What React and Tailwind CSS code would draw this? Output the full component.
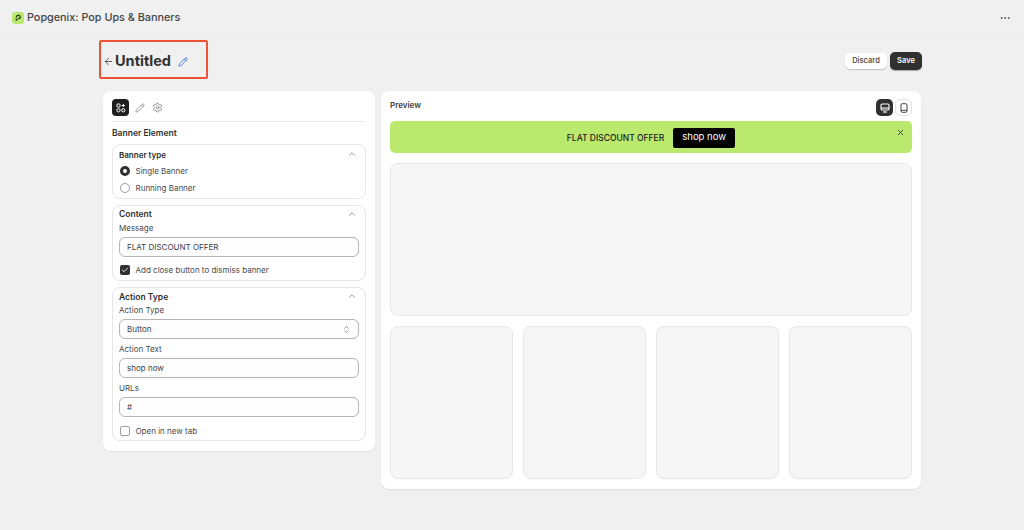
import React from "react";
import { ArrowLeft, Pencil, Settings, ChevronUp, ChevronsUpDown, Check, X, Ellipsis } from "lucide-react";

function Section({ title, h, titleClass, children }) {
  return (
    <div className={`border border-[#e6e6e6] rounded-[8px] px-[6px] ${h}`}>
      <div className={`flex items-center justify-between h-[12px] ${titleClass}`}>
        {title}
        <ChevronUp size={10} strokeWidth={1.5} className="text-[#555] mr-[2px] -mt-[2px]" />
      </div>
      {children}
    </div>
  );
}

function Field({ label, value, right }) {
  return (
    <div>
      <div className="text-[8px] leading-[12px] pt-[0.5px] text-[#4a4a4a]">{label}</div>
      <div className="mt-[3px] h-[20px] border border-[#b5b5b5] rounded-[6px] bg-[#fdfdfd] px-[7px] flex items-center justify-between text-[8px] text-[#404040]">
        <span>{value}</span>
        {right}
      </div>
    </div>
  );
}

function Radio({ on, label }) {
  return (
    <div className="flex items-center gap-[5.5px] h-[17px] pl-[1px]">
      <span className={`w-[10px] h-[10px] rounded-full bg-white ${on ? "border-[3px] border-[#303030]" : "border border-[#a0a0a0]"}`} />
      <span className="text-[8px] text-[#4a4a4a]">{label}</span>
    </div>
  );
}

export default function App() {
  return (
    <div className="w-[1024px] h-[530px] overflow-hidden bg-[#f0f0f0] text-[#303030]" style={{ fontFamily: "Inter, 'Liberation Sans', sans-serif" }}>
      <header className="h-[34px] pt-[3px] border-b border-[#ebebeb] flex items-center justify-between pl-[12px] pr-[13px]">
        <div className="flex items-center gap-[3px]">
          <span className="w-[12px] h-[12px] rounded-[3px] bg-[#b9e86c] flex items-center justify-center">
            <svg width="8" height="8" viewBox="0 0 8 8" fill="none">
              <path d="M2.4 3.6V3a1.6 1.6 0 0 1 1.6-1.6h.6A1.6 1.6 0 0 1 6.2 3v.2a1.4 1.4 0 0 1-1.4 1.4H4" stroke="#1f3a12" strokeWidth="1.3" />
              <circle cx="2.5" cy="5.6" r="1.1" fill="#1f3a12" />
            </svg>
          </span>
          <span className="text-[10.8px] font-medium text-[#444] leading-none">Popgenix: Pop Ups &amp; Banners</span>
        </div>
        <Ellipsis size={12} className="text-[#555]" />
      </header>

      <main className="w-[818px] mx-auto">
        <div className="h-[52px] mb-[5px] flex items-center justify-between">
          <div className="-ml-[4px] -mt-[2px] w-[109px] h-[39px] pt-[5px] border-2 border-[#ee5335] rounded-[2px] flex items-center pl-[2px]">
            <ArrowLeft size={11} strokeWidth={1.75} className="text-[#444]" />
            <span className="ml-[1px] text-[14.5px] font-bold text-[#303030] leading-none">Untitled</span>
            <Pencil size={10} strokeWidth={2} className="ml-[7px] text-[#2f6fdc]" />
          </div>
          <div className="flex items-center gap-[3px] mr-[-1px] mt-[1px]">
            <button className="w-[42px] h-[16px] rounded-[5px] bg-white shadow-[0_1px_1px_rgba(0,0,0,0.2)] text-[7.5px] font-semibold text-[#555]">Discard</button>
            <button className="w-[32px] h-[18px] rounded-[5px] bg-[#303030] shadow-[0_1px_1px_rgba(0,0,0,0.3)] text-[7.5px] font-semibold text-white">Save</button>
          </div>
        </div>

        <div className="flex items-start gap-[6px]">
          <section className="w-[272px] h-[360px] bg-white rounded-[8px] shadow-[0_1px_1px_rgba(0,0,0,0.08)] px-[9px] pt-[8px]">
            <div className="flex items-center gap-[6px] h-[17px] pb-[5px] border-b border-[#ebebeb] box-content">
              <span className="w-[17px] h-[17px] rounded-[4px] bg-[#1f1f1f] flex items-center justify-center">
                <svg width="10" height="10" viewBox="0 0 11 11" fill="none" stroke="white" strokeWidth="1.1">
                  <rect x="1" y="1" width="3.5" height="3.5" rx="1.2" />
                  <circle cx="2.75" cy="8" r="1.8" />
                  <circle cx="8" cy="8" r="1.8" />
                  <path d="M8 1v3.5M6.25 2.75h3.5" />
                </svg>
              </span>
              <Pencil size={10} strokeWidth={1.25} className="text-[#555]" />
              <Settings size={11} strokeWidth={1.25} className="text-[#555] ml-[1px]" />
            </div>
            <div className="h-[22px] flex items-center text-[8.5px] font-semibold text-[#303030]">Banner Element</div>

            <div className="flex flex-col gap-[6px]">
              <Section title={<span className="text-[8px] font-semibold text-[#303030]">Banner type</span>} h="h-[55px]" titleClass="mt-[4px]">
                <div className="mt-[1px]">
                  <Radio on label="Single Banner" />
                  <Radio label="Running Banner" />
                </div>
              </Section>

              <Section title={<span className="text-[8.5px] font-semibold text-[#303030]">Content</span>} h="h-[76px]" titleClass="mt-[2.5px] mb-[1px]">
                <Field label="Message" value="FLAT DISCOUNT OFFER" />
                <div className="flex items-center gap-[5.5px] mt-[7px] pl-[1px]">
                  <span className="w-[10px] h-[10px] rounded-[2px] bg-[#303030] flex items-center justify-center">
                    <Check size={8} strokeWidth={2.5} className="text-white" />
                  </span>
                  <span className="text-[8px] text-[#4a4a4a]">Add close button to dismiss banner</span>
                </div>
              </Section>

              <Section title={<span className="text-[8.5px] font-semibold text-[#303030]">Action Type</span>} h="h-[154px]" titleClass="mt-[3px] mb-[0.5px]">
                <div className="flex flex-col gap-[3.5px]">
                  <Field label="Action Type" value="Button" right={<ChevronsUpDown size={9} strokeWidth={1.5} className="text-[#555]" />} />
                  <Field label="Action Text" value="shop now" />
                  <Field label="URLs" value="#" />
                </div>
                <div className="flex items-center gap-[5.5px] mt-[8px] pl-[1px]">
                  <span className="w-[10px] h-[10px] rounded-[2px] border border-[#a0a0a0] bg-white" />
                  <span className="text-[8px] text-[#4a4a4a]">Open in new tab</span>
                </div>
              </Section>
            </div>
          </section>

          <section className="flex-1 h-[398px] bg-white rounded-[8px] shadow-[0_1px_1px_rgba(0,0,0,0.08)] px-[9px] pt-[8px]">
            <div className="h-[22px] flex items-start justify-between">
              <span className="text-[8px] font-semibold text-[#404040]">Preview</span>
              <div className="flex gap-[2px]">
                <span className="w-[17px] h-[17px] rounded-[5px] bg-[#303030] flex items-center justify-center">
                  <svg width="10" height="10" viewBox="0 0 10 10" fill="none" stroke="white" strokeWidth="1.1">
                    <rect x="1" y="1" width="8" height="6" rx="1.2" />
                    <path d="M1 5h8" />
                    <path d="M3.3 9h3.4" strokeWidth="1.3" />
                  </svg>
                </span>
                <span className="w-[17px] h-[17px] rounded-[5px] bg-white border border-[#e3e3e3] flex items-center justify-center">
                  <svg width="10" height="10" viewBox="0 0 10 10" fill="none" stroke="#444" strokeWidth="1">
                    <rect x="2" y="0.7" width="6" height="8.6" rx="1.3" />
                    <path d="M2 7.3h6" />
                  </svg>
                </span>
              </div>
            </div>

            <div className="relative h-[32px] pt-[1px] rounded-[5px] bg-[#bbe96d] flex items-center justify-center gap-[9px]">
              <span className="mt-[1px] text-[8.5px] font-medium text-[#222]">FLAT DISCOUNT OFFER</span>
              <span className="h-[20px] w-[62px] rounded-[2px] bg-black text-white text-[9.5px] flex items-center justify-center">shop now</span>
              <X size={9} strokeWidth={2.25} className="absolute right-[7px] top-[7px] text-[#303030]" />
            </div>

            <div className="mt-[10px] h-[153px] rounded-[8px] bg-[#f6f6f6] border border-[#e6e6e6]" />

            <div className="mt-[10px] grid grid-cols-4 gap-[10px]">
              <div className="h-[153px] rounded-[8px] bg-[#f6f6f6] border border-[#e6e6e6]" />
              <div className="h-[153px] rounded-[8px] bg-[#f6f6f6] border border-[#e6e6e6]" />
              <div className="h-[153px] rounded-[8px] bg-[#f6f6f6] border border-[#e6e6e6]" />
              <div className="h-[153px] rounded-[8px] bg-[#f6f6f6] border border-[#e6e6e6]" />
            </div>
          </section>
        </div>
      </main>
    </div>
  );
}
